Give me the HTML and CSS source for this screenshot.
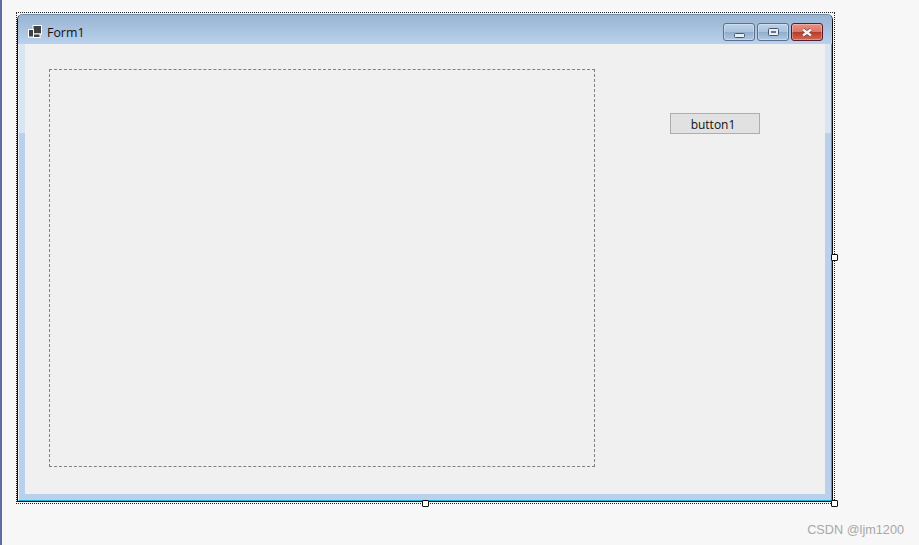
FILE: index.html
```html
<!DOCTYPE html>
<html lang="en">
<head>
<meta charset="utf-8">
<title>Form1</title>
<link rel="stylesheet" href="styles.css">
</head>
<body>
<div class="page">
  <div class="selection">
    <div class="window">
      <div class="titlebar">
        <svg class="form-icon" width="14" height="13" viewBox="0 0 14 13">
          <rect x="5" y="0.5" width="8.5" height="8.5" fill="#404040" stroke="#fff"/>
          <rect x="0.5" y="4.5" width="5" height="7.5" fill="#404040" stroke="#fff"/>
          <rect x="5.5" y="9" width="6.5" height="3.5" fill="#404040" stroke="#fff"/>
        </svg>
        <span class="form-title">Form1</span>
        <div class="controls">
          <div class="ctl ctl-min">
            <svg width="11" height="5" viewBox="0 0 11 5"><rect x="0.5" y="0.5" width="10" height="4" rx="1" fill="#e8edf2" stroke="#46566e"/></svg>
          </div>
          <div class="ctl">
            <svg width="11" height="8" viewBox="0 0 11 8"><rect x="0.5" y="0.5" width="10" height="7" rx="1" fill="#e8edf2" stroke="#46566e"/><rect x="3" y="3" width="5" height="2" fill="#5f7590"/></svg>
          </div>
          <div class="ctl ctl-close">
            <svg width="12" height="9" viewBox="0 0 12 9"><path d="M2 1.5 L10 7.5 M10 1.5 L2 7.5" fill="none" stroke="#6b3a40" stroke-width="3.6"/><path d="M2 1.5 L10 7.5 M10 1.5 L2 7.5" fill="none" stroke="#f4f1f1" stroke-width="2.4"/></svg>
          </div>
        </div>
      </div>
      <div class="frame">
        <div class="client">
          <div class="panel"></div>
          <div class="side">
            <div class="button1">button1</div>
          </div>
        </div>
      </div>
    </div>
    <span class="handle handle-right"></span>
    <span class="handle handle-bottom"></span>
    <span class="handle handle-corner"></span>
  </div>
  <div class="watermark">CSDN @ljm1200</div>
</div>
</body>
</html>
```

FILE: styles.css
```css
* { box-sizing: border-box; }
html, body { margin: 0; height: 100%; }
body { overflow: hidden; background: #f7f7f7; }

.page {
  position: relative;
  width: 919px;
  height: 545px;
  padding: 12px 0 0 14px;
  border-left: 2px solid #5e6c9e;
}

.selection {
  position: relative;
  width: 819px;
  height: 492px;
  border: 1px dotted #222;
  padding-top: 1px;
}

.window {
  width: 816px;
  height: 488px;
  border-left: 1px solid #111;
  border-right: 1px solid #111;
  border-bottom: 1px solid #111;
  border-radius: 6px 6px 0 0;
  display: flex;
  flex-direction: column;
  overflow: hidden;
  background: #b9d1ec;
}

.titlebar {
  height: 30px;
  flex: none;
  display: flex;
  align-items: center;
  padding-left: 10px;
  background: linear-gradient(#98b4d2, #b9d1ec);
  border-top: 1px solid #6f8eae;
}
.form-icon { flex: none; margin-top: 4px; }
.form-title {
  margin-left: 5px;
  margin-top: 5px;
  font: 12.4px "Open Sans", "Noto Sans", sans-serif;
  color: #111;
}
.controls {
  margin-left: auto;
  margin-right: 9px;
  align-self: flex-start;
  margin-top: 8px;
  display: flex;
  gap: 2px;
}
.ctl {
  width: 32px;
  height: 18px;
  display: flex;
  align-items: center;
  justify-content: center;
  border: 1px solid #5d6f8c;
  border-radius: 3px;
  background: linear-gradient(#bcd1e8 0, #a9c3de 48%, #8fadcc 52%, #b0c9e2 100%);
  box-shadow: inset 0 0 0 1px rgba(255, 255, 255, 0.3);
}
.ctl-min { padding-top: 7px; }
.ctl-close {
  border-color: #5a1a2c;
  background: linear-gradient(#e89084 0, #dd7565 48%, #b63c28 52%, #cf6a55 100%);
}

.frame {
  flex: 1;
  display: flex;
  padding: 0 6px 6px 6px;
  border-left: 1px solid #eef3f8;
  border-right: 1px solid #17b4dc;
  border-bottom: 1px solid #17b4dc;
  background: linear-gradient(#d8e5f3 0, #d8e5f3 89px, #b9d1ec 89px, #b9d1ec 100%);
}
.client {
  flex: 1;
  display: flex;
  background: #f0f0f0;
  padding: 25px 0 0 24px;
}
.panel {
  width: 546px;
  height: 398px;
  flex: none;
  border: 1px dashed #808080;
}
.side {
  padding: 44px 0 0 75px;
}
.button1 {
  width: 90px;
  height: 21px;
  display: flex;
  align-items: center;
  justify-content: center;
  padding: 1px 4px 0 0;
  background: #e1e1e1;
  border: 1px solid #adadad;
  font: 12px "Open Sans", "Noto Sans", sans-serif;
  color: #111;
}

.handle {
  position: absolute;
  width: 7px;
  height: 7px;
  background: #fff;
  border: 1px solid #111;
  border-radius: 1px;
}
.handle-right { left: 814px; top: 241px; }
.handle-bottom { left: 405px; top: 487px; }
.handle-corner { left: 814px; top: 487px; }

.watermark {
  position: absolute;
  right: 15px;
  bottom: 8px;
  font: 12.7px "Liberation Sans", sans-serif;
  color: #a8a8a8;
}
```
